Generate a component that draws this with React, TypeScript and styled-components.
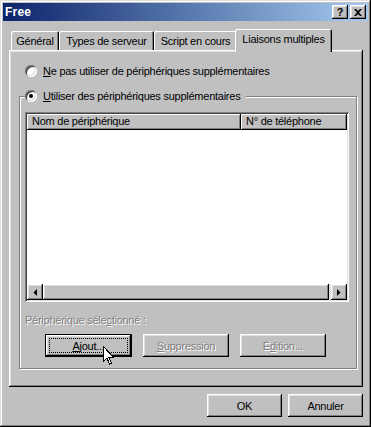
import React from 'react';
import styled, { createGlobalStyle, css } from 'styled-components';

const face = '#c0c0c0';

const GlobalStyle = createGlobalStyle`
  html, body {
    margin: 0;
    padding: 0;
    background: ${face};
  }
`;

const raised = css`
  box-shadow: inset -1px -1px #000, inset 1px 1px #fff, inset -2px -2px #808080, inset 2px 2px #dfdfdf;
`;

const sunken = css`
  box-shadow: inset 1px 1px #808080, inset -1px -1px #fff, inset 2px 2px #404040, inset -2px -2px #dfdfdf;
`;

const Window = styled.div`
  position: relative;
  width: 371px;
  height: 427px;
  box-sizing: border-box;
  padding: 3px;
  background: ${face};
  box-shadow: inset -1px -1px #000, inset 1px 1px #dfdfdf, inset -2px -2px #808080, inset 2px 2px #fff;
  display: flex;
  flex-direction: column;
  font-family: "Liberation Sans", Arial, sans-serif;
  font-size: 11px;
  letter-spacing: -0.25px;
  color: #000;
  overflow: hidden;
`;

const TitleBar = styled.div`
  height: 18px;
  display: flex;
  align-items: center;
  padding: 0 2px 0 2px;
  background: linear-gradient(to right, #0a246a, #a6caf0);
`;

const TitleText = styled.div`
  flex: 1;
  color: #fff;
  font-weight: bold;
  font-size: 12px;
  letter-spacing: 0.2px;
`;

const CaptionButton = styled.div<{ $gap?: boolean }>`
  width: 16px;
  height: 14px;
  box-sizing: border-box;
  background: ${face};
  ${raised};
  display: flex;
  align-items: center;
  justify-content: center;
  margin-left: ${p => (p.$gap ? '2px' : '0')};
  font-weight: bold;
  font-size: 11px;
  line-height: 14px;
`;

const Body = styled.div`
  flex: 1;
  display: flex;
  flex-direction: column;
  padding: 8px 5px 0 6px;
`;

const TabStrip = styled.div`
  height: 21px;
  display: flex;
  align-items: flex-end;
  padding-left: 2px;
`;

const Tab = styled.div<{ $w: number; $active?: boolean }>`
  width: ${p => p.$w}px;
  height: ${p => (p.$active ? 23 : 19)}px;
  box-sizing: border-box;
  display: flex;
  align-items: center;
  justify-content: center;
  padding-top: ${p => (p.$active ? 0 : 1)}px;
  background: ${face};
  border-radius: 2px 2px 0 0;
  box-shadow: inset 1px 1px #fff, inset -1px 0 #000, inset -2px 0 #808080;
  white-space: nowrap;
  ${p =>
    p.$active &&
    css`
      position: relative;
      z-index: 1;
      margin: 0 0 -2px -2px;
      padding-bottom: 3px;
    `}
`;

const Panel = styled.div`
  height: 337px;
  box-sizing: border-box;
  padding: 14px 6px 0 10px;
  background: ${face};
  box-shadow: inset -1px -1px #000, inset 1px 1px #fff, inset -2px -2px #808080, inset 2px 2px #dfdfdf;
`;

const RadioRow = styled.label<{ $indent?: number }>`
  height: 14px;
  display: flex;
  align-items: center;
  gap: 6px;
  margin-left: ${p => p.$indent ?? 0}px;
  white-space: nowrap;
`;

const Radio = styled.span<{ $checked?: boolean }>`
  position: relative;
  width: 12px;
  height: 12px;
  flex: none;
  border-radius: 50%;
  background: #fff;
  box-shadow: inset 1px 1px #808080, inset -1px -1px #fff, inset 2px 2px #404040, inset -2px -2px #dfdfdf;
  &::after {
    content: '';
    display: ${p => (p.$checked ? 'block' : 'none')};
    position: absolute;
    left: 4px;
    top: 4px;
    width: 4px;
    height: 4px;
    border-radius: 50%;
    background: #000;
  }
`;

const Group = styled.fieldset`
  margin: 11px 0 0 0;
  padding: 0 7px 11px 5px;
  min-width: 0;
  border: 1px solid #808080;
  box-shadow: inset 1px 1px #fff, 1px 1px #fff;
`;

const Legend = styled.legend`
  padding: 0 6px 0 0;
  background: ${face};
`;

const ListView = styled.div`
  margin-top: 9px;
  height: 190px;
  box-sizing: border-box;
  padding: 2px;
  background: #fff;
  ${sunken};
  display: flex;
  flex-direction: column;
`;

const HeaderRow = styled.div`
  display: flex;
  height: 16px;
`;

const HeaderCell = styled.div<{ $w?: number }>`
  ${p => (p.$w ? `width: ${p.$w}px;` : 'flex: 1;')}
  box-sizing: border-box;
  background: ${face};
  box-shadow: inset -1px -1px #000, inset 1px 1px #fff, inset -2px -2px #808080;
  padding-left: 5px;
  line-height: 15px;
  white-space: nowrap;
  overflow: hidden;
`;

const ListBody = styled.div`
  flex: 1;
  background: #fff;
`;

const ScrollBar = styled.div`
  height: 16px;
  display: flex;
  background: ${face};
`;

const ScrollArrow = styled.div`
  width: 16px;
  height: 16px;
  box-sizing: border-box;
  background: ${face};
  ${raised};
  display: flex;
  align-items: center;
  justify-content: center;
`;

const ScrollThumb = styled.div`
  flex: 1;
  background: ${face};
  ${raised};
`;

const ScrollTrack = styled.div`
  width: 2px;
  background: repeating-conic-gradient(#fff 0 25%, ${face} 0 50%) 0 0 / 2px 2px;
`;

const DisabledLabel = styled.div`
  margin-top: 11px;
  line-height: 14px;
  color: #808080;
  text-shadow: 1px 1px #fff;
`;

const ButtonRow = styled.div`
  margin-top: 7px;
  padding-left: 20px;
  display: flex;
  gap: 11px;
`;

const Button = styled.div<{ $w?: number; $default?: boolean; $disabled?: boolean }>`
  position: relative;
  width: ${p => p.$w ?? 86}px;
  height: 23px;
  box-sizing: border-box;
  display: flex;
  align-items: center;
  justify-content: center;
  background: ${face};
  color: ${p => (p.$disabled ? '#808080' : '#000')};
  text-shadow: ${p => (p.$disabled ? '1px 1px #fff' : 'none')};
  ${p =>
    p.$default
      ? css`
          border: 1px solid #000;
          box-shadow: inset -1px -1px #000, inset 1px 1px #fff, inset -2px -2px #808080, inset 2px 2px #dfdfdf;
          &::after {
            content: '';
            position: absolute;
            inset: 3px;
            border: 1px dotted #000;
          }
        `
      : raised}
`;

const Footer = styled.div`
  margin-top: 7px;
  display: flex;
  justify-content: flex-end;
  gap: 6px;
`;

const Cursor = styled.svg`
  position: absolute;
  left: 103px;
  top: 346px;
  shape-rendering: crispEdges;
`;

const LeftTri = () => (
  <svg width="4" height="7" viewBox="0 0 4 7">
    <path d="M4 0 L4 7 L0.5 3.5 Z" fill="#000" />
  </svg>
);

const RightTri = () => (
  <svg width="4" height="7" viewBox="0 0 4 7">
    <path d="M0 0 L0 7 L3.5 3.5 Z" fill="#000" />
  </svg>
);

const App: React.FC = () => {
  return (
    <>
      <GlobalStyle />
      <Window>
        <TitleBar>
          <TitleText>Free</TitleText>
          <CaptionButton>?</CaptionButton>
          <CaptionButton $gap>
            <svg width="8" height="7" viewBox="0 0 8 7">
              <path d="M0 0 L2 0 L4 2 L6 0 L8 0 L5 3.5 L8 7 L6 7 L4 5 L2 7 L0 7 L3 3.5 Z" fill="#000" />
            </svg>
          </CaptionButton>
        </TitleBar>
        <Body>
          <TabStrip>
            <Tab $w={48}>Général</Tab>
            <Tab $w={95}>Types de serveur</Tab>
            <Tab $w={83}>Script en cours</Tab>
            <Tab $w={97} $active>Liaisons multiples</Tab>
          </TabStrip>
          <Panel>
            <RadioRow $indent={6}>
              <Radio />
              <span><u>N</u>e pas utiliser de périphériques supplémentaires</span>
            </RadioRow>
            <Group>
              <Legend>
                <RadioRow>
                  <Radio $checked />
                  <span><u>U</u>tiliser des périphériques supplémentaires</span>
                </RadioRow>
              </Legend>
              <ListView>
                <HeaderRow>
                  <HeaderCell $w={214}>Nom de périphérique</HeaderCell>
                  <HeaderCell>N° de téléphone</HeaderCell>
                </HeaderRow>
                <ListBody />
                <ScrollBar>
                  <ScrollArrow><LeftTri /></ScrollArrow>
                  <ScrollThumb />
                  <ScrollTrack />
                  <ScrollArrow><RightTri /></ScrollArrow>
                </ScrollBar>
              </ListView>
              <DisabledLabel>Périphérique séle<u>c</u>tionné :</DisabledLabel>
              <ButtonRow>
                <Button $w={87} $default><span><u>A</u>jout...</span></Button>
                <Button $disabled><span><u>S</u>uppression</span></Button>
                <Button $disabled><span>É<u>d</u>ition...</span></Button>
              </ButtonRow>
            </Group>
          </Panel>
          <Footer>
            <Button $w={75}>OK</Button>
            <Button $w={75}>Annuler</Button>
          </Footer>
        </Body>
        <Cursor width="12" height="20" viewBox="0 0 12 20">
          <path
            d="M0.5 0.5 L0.5 15.5 L4 12 L6.5 18 L8.5 17 L6 11.5 L10.5 11.5 Z"
            fill="#fff"
            stroke="#000"
            strokeWidth="1"
          />
        </Cursor>
      </Window>
    </>
  );
};

export default App;
